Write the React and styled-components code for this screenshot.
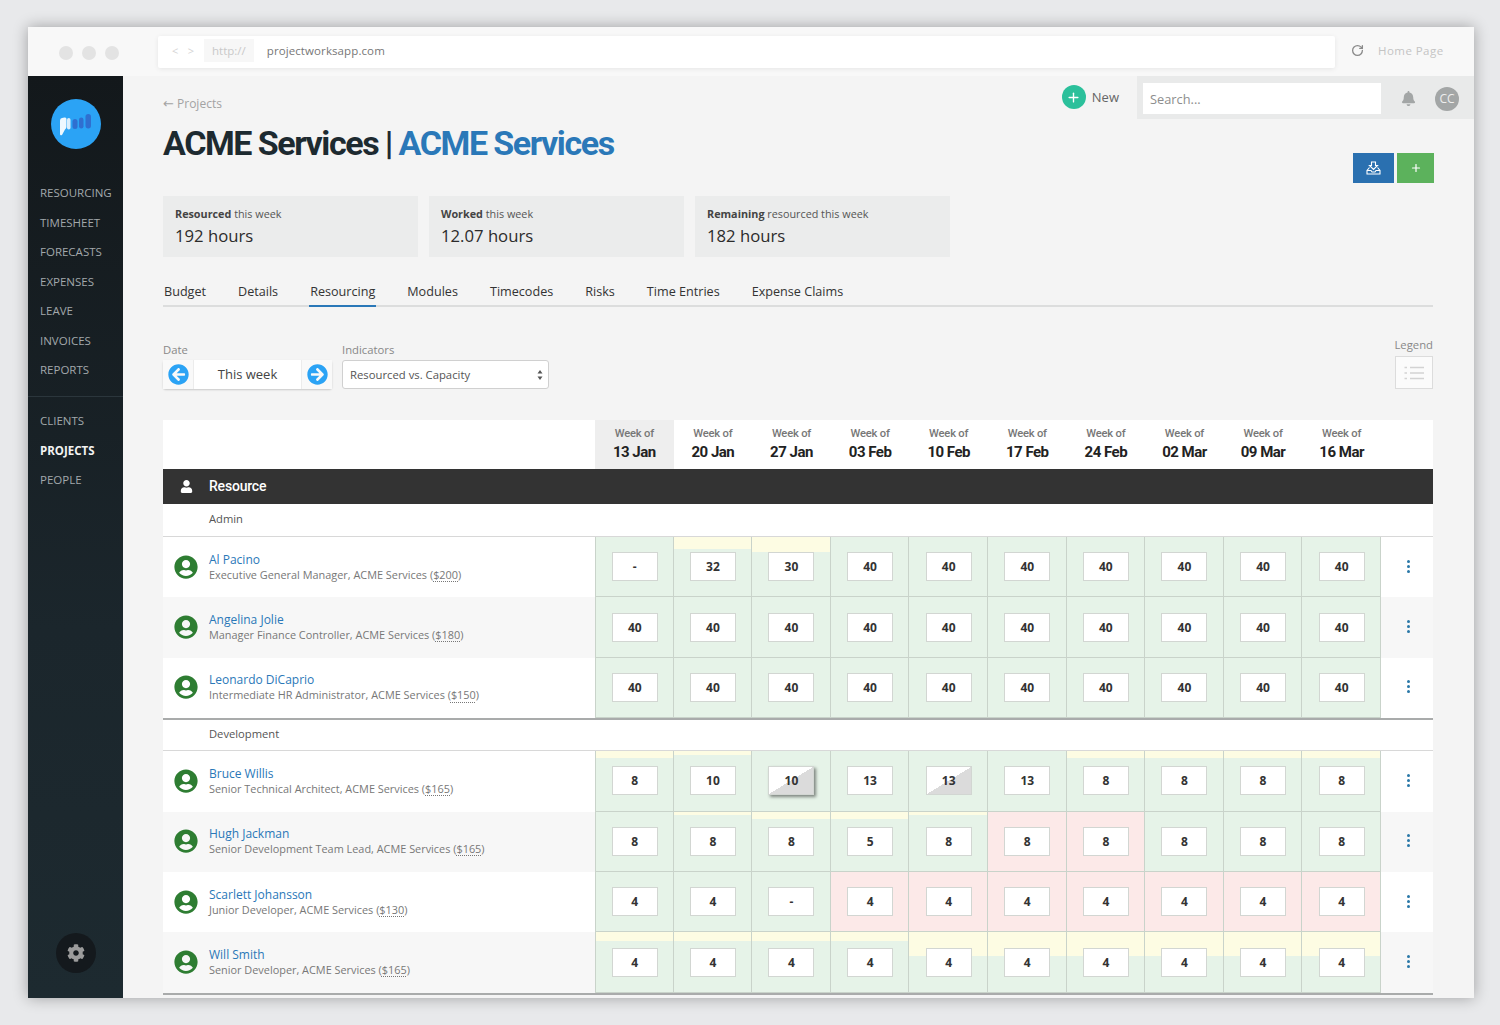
import React from 'react';
import styled, { createGlobalStyle } from 'styled-components';
import { FaUserCircle, FaUser, FaBell, FaArrowCircleLeft, FaArrowCircleRight, FaCog } from 'react-icons/fa';
import { RotateCw, Plus } from 'lucide-react';

const GlobalStyle = createGlobalStyle`
   * { box-sizing: border-box; }
   html, body { margin: 0; padding: 0; }
   body {
      background: #e8e9eb;
      font-family: 'Open Sans', 'Liberation Sans', sans-serif;
      color: #333;
   }
`;

const weeks = ['13 Jan', '20 Jan', '27 Jan', '03 Feb', '10 Feb', '17 Feb', '24 Feb', '02 Mar', '09 Mar', '16 Mar'];
const navTop = ['Resourcing', 'Timesheet', 'Forecasts', 'Expenses', 'Leave', 'Invoices', 'Reports'];
const navBottom = ['Clients', 'Projects', 'People'];
const tabs = ['Budget', 'Details', 'Resourcing', 'Modules', 'Timecodes', 'Risks', 'Time Entries', 'Expense Claims'];

const fill = (v) => Array(10).fill(v);

const groups = [
   {
      name: 'Admin',
      people: [
         { name: 'Al Pacino', role: 'Executive General Manager, ACME Services', rate: '$200', values: ['-', 32, 30, 40, 40, 40, 40, 40, 40, 40], yellow: [0, 12, 15, 0, 0, 0, 0, 0, 0, 0] },
         { name: 'Angelina Jolie', role: 'Manager Finance Controller, ACME Services', rate: '$180', values: fill(40) },
         { name: 'Leonardo DiCaprio', role: 'Intermediate HR Administrator, ACME Services', rate: '$150', values: fill(40) },
      ],
   },
   {
      name: 'Development',
      people: [
         { name: 'Bruce Willis', role: 'Senior Technical Architect, ACME Services', rate: '$165', values: [8, 10, 10, 13, 13, 13, 8, 8, 8, 8], yellow: [7, 4, 0, 0, 0, 0, 7, 7, 7, 7], fold: { 2: 'raised', 4: 'flat' } },
         { name: 'Hugh Jackman', role: 'Senior Development Team Lead, ACME Services', rate: '$165', values: [8, 8, 8, 5, 8, 8, 8, 8, 8, 8], yellow: [0, 3, 7, 7, 3, 0, 0, 0, 0, 0], red: [5, 6] },
         { name: 'Scarlett Johansson', role: 'Junior Developer, ACME Services', rate: '$130', values: [4, 4, '-', 4, 4, 4, 4, 4, 4, 4], red: [3, 4, 5, 6, 7, 8, 9] },
         { name: 'Will Smith', role: 'Senior Developer, ACME Services', rate: '$165', values: fill(4), yellow: [9, 9, 9, 9, 24, 24, 24, 24, 24, 24] },
      ],
   },
];

const App = () => {
   return (
      <>
         <GlobalStyle />
         <Page>
            <Window>
               <Chrome>
                  <Dots><i /><i /><i /></Dots>
                  <UrlField>
                     <UrlArrows><span>&lt;</span><span>&gt;</span></UrlArrows>
                     <Scheme>http://</Scheme>
                     <Url>projectworksapp.com</Url>
                  </UrlField>
                  <HomeLink><RotateCw size={13} strokeWidth={2.4} color="#8a8a8a" /><span>Home Page</span></HomeLink>
               </Chrome>
               <Body>
                  <Sidebar>
                     <Logo>
                        <svg width="50" height="50" viewBox="0 0 50 50">
                           <circle cx="25" cy="25" r="25" fill="#2ba3f5" />
                           <path d="M9 21.500 q0 -2 2 -2.400 l2.500 -.6 q2 -.3 2 1.500 v8 q0 1.500 -1.500 2.400 l-3 5.500 q-2 1 -2 -1z" fill="#fff" opacity=".92" />
                           <rect x="16" y="19" width="3.500" height="11.500" rx="1.750" fill="#dbeefc" />
                           <rect x="21.500" y="20" width="5" height="10" rx="2.500" fill="#2f6fd0" />
                           <rect x="28" y="18.500" width="4.500" height="11" rx="2.250" fill="#2f6fd0" />
                           <rect x="34.500" y="15" width="5.500" height="14.500" rx="2.750" fill="#2f6fd0" />
                        </svg>
                     </Logo>
                     <NavList>
                        {navTop.map((n) => <NavItem key={n}>{n}</NavItem>)}
                     </NavList>
                     <NavDivider />
                     <NavList>
                        {navBottom.map((n) => <NavItem key={n} $active={n === 'Projects'}>{n}</NavItem>)}
                     </NavList>
                     <GearButton><FaCog size={18} /></GearButton>
                  </Sidebar>
                  <Main>
                     <Header>
                        <HeaderLeft>
                           <BackLink><i>←</i> Projects</BackLink>
                           <Title>ACME Services | <span>ACME Services</span></Title>
                        </HeaderLeft>
                        <HeaderRight>
                           <TopActions>
                              <NewButton><i><Plus size={15} strokeWidth={2.2} /></i>New</NewButton>
                              <SearchBar>
                                 <SearchBox>Search...</SearchBox>
                                 <FaBell size={15} color="#a3a6a6" />
                                 <UserBadge>CC</UserBadge>
                              </SearchBar>
                           </TopActions>
                           <ActionButtons>
                              <ActionButton $color="#2a70b0" $wide>
                                 <svg width="15" height="14" viewBox="0 0 15 14" fill="none" stroke="#fff" strokeWidth="1.100">
                                    <path d="M5.500 1h4v3.500h2L7.500 8.500l-4-4h2z" />
                                    <path d="M3.500 6.500L1 9.500v3.500h13V9.500l-2.500-3M1 9.500h4l1 1.500h3l1-1.500h4" />
                                 </svg>
                              </ActionButton>
                              <ActionButton $color="#5cb25c"><Plus size={12} strokeWidth={2.4} /></ActionButton>
                           </ActionButtons>
                        </HeaderRight>
                     </Header>
                     <Content>
                        <Stats>
                           <Stat><StatLabel><b>Resourced</b> this week</StatLabel><StatValue>192 hours</StatValue></Stat>
                           <Stat><StatLabel><b>Worked</b> this week</StatLabel><StatValue>12.07 hours</StatValue></Stat>
                           <Stat><StatLabel><b>Remaining</b> resourced this week</StatLabel><StatValue>182 hours</StatValue></Stat>
                        </Stats>
                        <Tabs>
                           {tabs.map((t) => <Tab key={t} $active={t === 'Resourcing'}>{t}</Tab>)}
                        </Tabs>
                        <Filters>
                           <Field>
                              <FieldLabel>Date</FieldLabel>
                              <DatePicker>
                                 <DateArrow><FaArrowCircleLeft size={21} /></DateArrow>
                                 <DateText>This week</DateText>
                                 <DateArrow><FaArrowCircleRight size={21} /></DateArrow>
                              </DatePicker>
                           </Field>
                           <Field>
                              <FieldLabel>Indicators</FieldLabel>
                              <SelectBox>
                                 Resourced vs. Capacity
                                 <svg width="6" height="12" viewBox="0 0 6 12" fill="#555"><path d="M3 1l2.500 3.500h-5zM3 11L.5 7.500h5z" /></svg>
                              </SelectBox>
                           </Field>
                           <LegendField>
                              <FieldLabel>Legend</FieldLabel>
                              <LegendBox>
                                 <svg width="20" height="16" viewBox="0 0 20 16" fill="none" stroke="#d3d3d3" strokeWidth="1.400">
                                    <path d="M6 2.500h14M6 8h14M6 13.500h14M.5 2.500h2.500M.5 8h2.500M.5 13.500h2.500" />
                                 </svg>
                              </LegendBox>
                           </LegendField>
                        </Filters>
                        <Table>
                           <HeadRow>
                              <div />
                              {weeks.map((w, i) => (
                                 <WeekHead key={w} $current={i === 0}>
                                    <small>Week of</small>
                                    <strong>{w}</strong>
                                 </WeekHead>
                              ))}
                              <div />
                           </HeadRow>
                           <ResourceBar><FaUser size={13} /><span>Resource</span></ResourceBar>
                           {groups.map((g, gi) => (
                              <Group key={g.name}>
                                 <GroupTitle $first={gi === 0}>{g.name}</GroupTitle>
                                 {g.people.map((p, pi) => (
                                    <PersonRow key={p.name} $even={pi % 2 === 1}>
                                       <PersonCell>
                                          <Avatar size={24} />
                                          <PersonText>
                                             <PersonName>{p.name}</PersonName>
                                             <PersonRole>{p.role} (<u>{p.rate}</u>)</PersonRole>
                                          </PersonText>
                                       </PersonCell>
                                       {p.values.map((v, i) => (
                                          <WeekCell key={i} $yellow={p.yellow ? p.yellow[i] : 0} $red={p.red && p.red.includes(i)}>
                                             <HoursBox $fold={p.fold && p.fold[i]}>{v}</HoursBox>
                                          </WeekCell>
                                       ))}
                                       <MenuCell><Kebab><i /><i /><i /></Kebab></MenuCell>
                                    </PersonRow>
                                 ))}
                              </Group>
                           ))}
                        </Table>
                     </Content>
                  </Main>
               </Body>
            </Window>
         </Page>
      </>
   );
};

export default App;

const Page = styled.div`
   width: 1500px;
   height: 1025px;
   padding: 27px 26px 27px 28px;
   overflow: hidden;
`;

const Window = styled.div`
   height: 971px;
   display: flex;
   flex-direction: column;
   background: #f4f4f4;
   box-shadow: 0 0 14px rgba(0, 0, 0, .32);
   overflow: hidden;
`;

const Chrome = styled.div`
   height: 49px;
   flex: none;
   display: flex;
   align-items: flex-start;
   padding: 9px 30px 0 31px;
   background: #f8f8f8;
`;

const Dots = styled.div`
   display: flex;
   gap: 9px;
   padding-top: 10px;
   width: 99px;
   i { width: 14px; height: 14px; border-radius: 50%; background: #e3e3e3; }
`;

const UrlField = styled.div`
   width: 1177px;
   height: 32px;
   display: flex;
   align-items: center;
   padding-bottom: 3px;
   background: #fff;
   border-radius: 2px;
   box-shadow: 0 1px 5px rgba(0, 0, 0, .08);
   font-size: 11.500px;
`;

const UrlArrows = styled.span`
   width: 32px;
   margin-left: 14px;
   padding-right: 10px;
   display: flex;
   justify-content: space-between;
   color: #d4d4d4;
   font-size: 11px;
`;

const Scheme = styled.span`
   padding: 4px 8px;
   background: #f7f7f7;
   color: #c9c9c9;
`;

const Url = styled.span`
   margin-left: 13px;
   color: #777;
   letter-spacing: .1px;
`;

const HomeLink = styled.div`
   display: flex;
   align-items: center;
   gap: 14px;
   height: 28px;
   margin-left: 16px;
   color: #c4c4c4;
   font-size: 11.500px;
   letter-spacing: .45px;
`;

const Body = styled.div`
   flex: 1;
   min-height: 0;
   display: flex;
`;

const Sidebar = styled.nav`
   width: 95px;
   flex: none;
   display: flex;
   flex-direction: column;
   padding-bottom: 25px;
   background: linear-gradient(180deg, #13181b 0%, #1b262c 60%, #1d2a30 100%);
`;

const Logo = styled.div`
   height: 50px;
   margin: 23px 0 29px 23px;
`;

const NavList = styled.div`
   display: flex;
   flex-direction: column;
`;

const NavItem = styled.div`
   height: 29.500px;
   line-height: 29.500px;
   padding-left: 12px;
   font-size: 11.500px;
   text-transform: uppercase;
   font-weight: ${(p) => (p.$active ? 700 : 400)};
   color: ${(p) => (p.$active ? '#f2f2f2' : '#a2a8ab')};
`;

const NavDivider = styled.div`
   height: 1px;
   margin: 11px 0 9.500px;
   background: #2b363c;
`;

const GearButton = styled.div`
   width: 40px;
   height: 40px;
   margin: auto 0 0 28px;
   display: flex;
   align-items: center;
   justify-content: center;
   border-radius: 50%;
   background: #14191d;
   color: #9b9b9b;
`;

const Main = styled.main`
   flex: 1;
   min-width: 0;
   display: flex;
   flex-direction: column;
`;

const Header = styled.div`
   display: flex;
   justify-content: space-between;
   height: 120px;
   padding-left: 40px;
`;

const HeaderLeft = styled.div`
   padding-top: 19px;
`;

const BackLink = styled.div`
   font-size: 12px;
   line-height: 17px;
   color: #a3a3a3;
   i { font-style: normal; font-size: 13px; font-family: 'DejaVu Sans', sans-serif; }
`;

const Title = styled.h1`
   margin: 10px 0 0;
   font-family: Roboto, 'Liberation Sans', sans-serif;
   font-size: 34px;
   line-height: 42px;
   font-weight: 700;
   letter-spacing: -1.400px;
   word-spacing: -.5px;
   color: #1d2a30;
   span { color: #2a78b8; }
`;

const HeaderRight = styled.div`
   display: flex;
   flex-direction: column;
   align-items: flex-end;
`;

const TopActions = styled.div`
   display: flex;
   align-items: center;
   height: 43px;
`;

const NewButton = styled.div`
   display: flex;
   align-items: center;
   gap: 6px;
   margin-right: 18px;
   margin-top: -1px;
   font-size: 13px;
   color: #666;
   i {
      width: 24px;
      height: 24px;
      display: flex;
      align-items: center;
      justify-content: center;
      border-radius: 50%;
      background: #2bc09b;
      color: #fff;
   }
`;

const SearchBar = styled.div`
   width: 337px;
   height: 43px;
   display: flex;
   align-items: center;
   padding: 2px 0 0 6px;
   background: #e9eaea;
`;

const SearchBox = styled.div`
   width: 238px;
   height: 31px;
   margin-right: 20px;
   padding-left: 7px;
   line-height: 32px;
   background: #fff;
   font-size: 12.800px;
   color: #8d8d8d;
`;

const UserBadge = styled.div`
   width: 24px;
   height: 24px;
   margin-left: 19px;
   border-radius: 50%;
   background: #a3a6a6;
   color: #eee;
   font-size: 12px;
   line-height: 24px;
   text-align: center;
`;

const ActionButtons = styled.div`
   display: flex;
   gap: 3px;
   margin: 34px 40px 0 0;
`;

const ActionButton = styled.div`
   width: ${(p) => (p.$wide ? '41px' : '37px')};
   height: 30px;
   display: flex;
   align-items: center;
   justify-content: center;
   background: ${(p) => p.$color};
   color: #fff;
`;

const Content = styled.div`
   padding: 0 41px 0 40px;
`;

const Stats = styled.div`
   display: flex;
   gap: 11px;
`;

const Stat = styled.div`
   width: 255px;
   height: 61px;
   padding: 9px 12px 0;
   background: #ebecec;
`;

const StatLabel = styled.div`
   font-size: 10.800px;
   line-height: 17px;
   color: #555;
   b { font-weight: 700; color: #444; }
`;

const StatValue = styled.div`
   margin-top: 2px;
   font-size: 16.700px;
   line-height: 24px;
   color: #2b2b2b;
`;

const Tabs = styled.div`
   display: flex;
   gap: 30px;
   height: 50px;
   padding-top: 25px;
   border-bottom: 2px solid #dcdddd;
`;

const Tab = styled.div`
   height: 25px;
   padding: 0 1px;
   font-size: 12.620px;
   line-height: 20px;
   color: #333;
   border-bottom: ${(p) => (p.$active ? '2px solid #2a78b8' : 'none')};
`;

const Filters = styled.div`
   display: flex;
   align-items: flex-end;
   gap: 10px;
   height: 82px;
`;

const Field = styled.div`
   display: flex;
   flex-direction: column;
`;

const LegendField = styled(Field)`
   margin-left: auto;
   align-items: flex-end;
   div:first-child { margin-bottom: 3px; }
`;

const FieldLabel = styled.div`
   font-size: 11.300px;
   line-height: 17px;
   margin-bottom: 2px;
   color: #888;
`;

const DatePicker = styled.div`
   width: 169px;
   height: 29px;
   display: flex;
   align-items: stretch;
   background: #fff;
   border-radius: 3px;
   box-shadow: 0 1px 2px rgba(0, 0, 0, .18);
`;

const DateArrow = styled.div`
   width: 30px;
   display: flex;
   align-items: center;
   justify-content: center;
   background: #f9f9f9;
   color: #2ba3f5;
`;

const DateText = styled.div`
   flex: 1;
   border: solid #ececec;
   border-width: 0 1px;
   line-height: 29px;
   text-align: center;
   font-size: 13px;
   color: #444;
`;

const SelectBox = styled.div`
   width: 207px;
   height: 29px;
   display: flex;
   align-items: center;
   justify-content: space-between;
   padding: 0 5px 0 7px;
   background: #fff;
   border: 1px solid #d0d0d0;
   border-radius: 3px;
   font-size: 11.300px;
   color: #555;
`;

const LegendBox = styled.div`
   width: 38px;
   height: 33px;
   display: flex;
   align-items: center;
   justify-content: center;
   background: #fbfbfb;
   border: 1px solid #dcdcdc;
`;

const Table = styled.div`
   margin-top: 31px;
`;

const GRID = `grid-template-columns: 432px repeat(10, 78.600px) 1fr;`;

const HeadRow = styled.div`
   display: grid;
   ${GRID}
   height: 49px;
   background: #fff;
`;

const WeekHead = styled.div`
   display: flex;
   flex-direction: column;
   align-items: center;
   padding-top: 7px;
   font-family: Roboto, 'Liberation Sans', sans-serif;
   background: ${(p) => (p.$current ? '#eeeeee' : 'transparent')};
   small { font-size: 11.200px; line-height: 14px; font-weight: 500; color: #777; letter-spacing: -.2px; }
   strong { margin-top: 1px; font-size: 15px; line-height: 20px; font-weight: 700; color: #222; letter-spacing: -.5px; }
`;

const ResourceBar = styled.div`
   height: 35px;
   display: flex;
   align-items: center;
   padding-left: 17px;
   background: #333;
   color: #fff;
   span {
      margin: -2px 0 0 16px;
      font-family: Roboto, 'Liberation Sans', sans-serif;
      font-size: 14px;
      font-weight: 500;
      letter-spacing: -.2px;
   }
`;

const Group = styled.div`
   border-bottom: 2px solid #a9abab;
`;

const GroupTitle = styled.div`
   height: ${(p) => (p.$first ? '33px' : '31px')};
   padding-left: 46px;
   line-height: ${(p) => (p.$first ? '30px' : '27px')};
   background: #fff;
   border-bottom: 1px solid #d8d8d8;
   font-size: 11.200px;
   font-weight: 500;
   color: #555;
`;

const PersonRow = styled.div`
   display: grid;
   ${GRID}
   height: 60.400px;
   background: ${(p) => (p.$even ? '#f7f7f7' : '#fff')};
`;

const PersonCell = styled.div`
   display: flex;
   align-items: center;
   gap: 11px;
   padding-left: 11px;
`;

const Avatar = styled(FaUserCircle)`
   margin-bottom: 1px;
   color: #2e7d32;
`;

const PersonText = styled.div`
   margin-top: -1px;
`;

const PersonName = styled.div`
   font-size: 12px;
   line-height: 16px;
   color: #2a78b8;
`;

const PersonRole = styled.div`
   font-size: 10.900px;
   line-height: 14px;
   color: #777;
   u { text-decoration-style: dotted; text-underline-offset: 2px; }
`;

const WeekCell = styled.div`
   display: flex;
   align-items: center;
   justify-content: center;
   padding-left: 1px;
   border: solid #c9d3ca;
   border-width: 0 1px 1px 0;
   background: ${(p) => {
      const base = p.$red ? '#fce9e8' : '#e6f3e8';
      return p.$yellow ? `linear-gradient(#fdfce3 ${p.$yellow}px, ${base} ${p.$yellow}px)` : base;
   }};
   &:nth-child(2) { border-left-width: 1px; }
`;

const HoursBox = styled.div`
   width: 46px;
   height: 29px;
   line-height: 27px;
   text-align: center;
   border: 1px solid #d2d6d2;
   font-size: 12px;
   font-weight: 700;
   color: #333;
   background: ${(p) => (p.$fold ? 'linear-gradient(to bottom right, #fff 50%, #dbdbdb 50%)' : '#fff')};
   box-shadow: ${(p) => (p.$fold === 'raised' ? '2px 2px 3px rgba(0, 0, 0, .45)' : 'none')};
`;

const MenuCell = styled.div`
   display: flex;
   align-items: center;
   justify-content: center;
   padding-left: 3px;
`;

const Kebab = styled.div`
   display: flex;
   flex-direction: column;
   gap: 2px;
   margin-bottom: 2px;
   i { width: 3px; height: 3px; border-radius: 50%; background: #2a78a8; }
`;
